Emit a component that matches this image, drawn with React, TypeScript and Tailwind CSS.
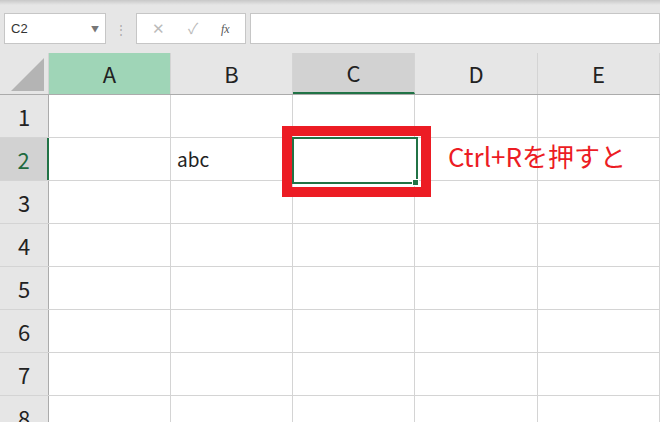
import React from "react";

const cols = ["A", "B", "C", "D", "E"];
const widths = [122, 122, 122, 123, 122];

export default function App() {
  const rows = [1, 2, 3, 4, 5, 6, 7, 8];
  return (
    <div className="w-[660px] h-[422px] overflow-hidden bg-white relative" style={{ fontFamily: '"Noto Sans CJK JP", "Liberation Sans", sans-serif' }}>
      <div className="h-[53px] bg-[#e6e6e6] flex flex-col">
        <div className="h-[5px] bg-gradient-to-b from-[#c8c8c8] to-[#e6e6e6]" />
        <div className="flex items-center mt-[8px] h-[31px]">
          <div className="ml-[4px] w-[102px] h-[31px] bg-white border border-[#c6c6c6] flex items-center justify-between px-[6px]">
            <span className="text-[13px] text-[#333]" style={{ fontFamily: '"Liberation Sans", sans-serif' }}>C2</span>
            <span className="text-[8px] text-[#777]">▼</span>
          </div>
          <span className="w-[30px] text-center text-[#aaa] text-[12px]">⋮</span>
          <div className="w-[110px] h-[31px] bg-white border border-[#c6c6c6] flex items-center justify-around px-[4px] text-[#bbb] text-[15px]">
            <span>✕</span><span>✓</span><span className="text-[#555] italic text-[12px]" style={{ fontFamily: '"Liberation Serif", serif' }}>fx</span>
          </div>
          <div className="ml-[4px] flex-1 h-[31px] bg-white border border-[#c6c6c6]" />
        </div>
      </div>
      <div className="flex h-[42px] bg-[#e6e6e6] border-b border-[#ababab]">
        <div className="w-[49px] relative border-r border-[#d4d4d4]">
          <div className="absolute right-[4px] bottom-[4px] w-0 h-0 border-l-[32px] border-t-[32px] border-l-transparent border-t-transparent border-r-0 border-b-0" style={{ borderRight: "0", borderBottom: "0" }} />
          <svg className="absolute right-[4px] bottom-[3px]" width="33" height="33"><polygon points="33,0 33,33 0,33" fill="#b4b4b4" /></svg>
        </div>
        {cols.map((c, i) => (
          <div key={c} style={{ width: widths[i] }} className={`flex items-center justify-center text-[22px] text-[#222] border-r border-[#d4d4d4] ${i === 0 ? "bg-[#9fd5b7]" : ""} ${i === 2 ? "bg-[#d2d2d2] border-b-2 border-b-[#217346] text-[#1f6a3f]" : ""}`} >{c}</div>
        ))}
      </div>
      {rows.map((r) => (
        <div key={r} className="flex h-[43px] border-b border-[#d4d4d4]">
          <div className={`w-[49px] flex items-center justify-center text-[22px] border-r ${r === 2 ? "bg-[#d2d2d2] text-[#1f6a3f] border-r-2 border-r-[#217346]" : "bg-[#e6e6e6] text-[#222] border-[#ababab]"}`}>{r}</div>
          {cols.map((c, i) => (
            <div key={c} style={{ width: widths[i] }} className="border-r border-[#d4d4d4] flex items-center px-[6px] text-[19px] text-[#222]">
              {r === 2 && c === "B" ? "abc" : ""}
            </div>
          ))}
        </div>
      ))}
      <div className="absolute left-[282px] top-[126px] w-[149px] h-[71px] border-[10px] border-[#ec1c24]" />
      <div className="absolute left-[292px] top-[137px] w-[126px] h-[47px] border-2 border-[#217346] bg-white" />
      <div className="absolute left-[412px] top-[179px] w-[7px] h-[7px] bg-[#217346] border border-white" />
      <div className="absolute left-[448px] top-[143px] text-[26px] text-[#ec1c24] leading-none">Ctrl+Rを押すと</div>
    </div>
  );
}
